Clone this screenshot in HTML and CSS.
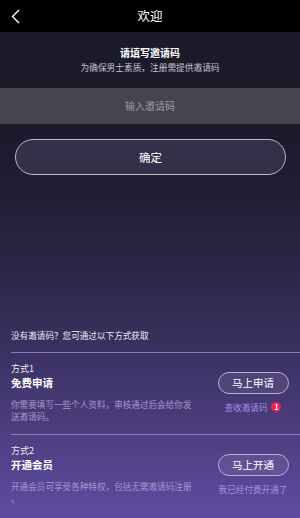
FILE: index.html
```html
<!DOCTYPE html>
<html lang="zh">
<head>
  <meta charset="UTF-8" />
  <meta name="viewport" content="width=device-width, initial-scale=1.0"/>
  <title>欢迎</title>
  <link rel="stylesheet" href="styles.css">
</head>
<body>
  <div class="page">
    <header class="topbar">
      <span class="back">
        <svg width="9" height="15" viewBox="0 0 9 15"><polyline points="8,1 1.5,7.5 8,14" fill="none" stroke="#fff" stroke-width="1.4"/></svg>
      </span>
      <h1>欢迎</h1>
      <span></span>
    </header>

    <div class="intro">
      <div class="intro-title">请填写邀请码</div>
      <div class="intro-sub">为确保男士素质，注册需提供邀请码</div>
    </div>

    <div class="code-input">输入邀请码</div>
    <div class="confirm">确定</div>

    <div class="notice">没有邀请码？您可通过以下方式获取</div>

    <div class="divider"></div>
    <div class="way">
      <div class="way-info">
        <div class="way-label">方式1</div>
        <div class="way-title">免费申请</div>
        <div class="way-desc">你需要填写一些个人资料，审核通过后会给你发送邀请码。</div>
      </div>
      <div class="way-action">
        <div class="pill">马上申请</div>
        <div class="link">查收邀请码 <span class="badge">1</span></div>
      </div>
    </div>

    <div class="divider"></div>
    <div class="way">
      <div class="way-info">
        <div class="way-label">方式2</div>
        <div class="way-title">开通会员</div>
        <div class="way-desc">开通会员可享受各种特权，包括无需邀请码注册。</div>
      </div>
      <div class="way-action">
        <div class="pill">马上开通</div>
        <div class="link">我已经付费开通了</div>
      </div>
    </div>
  </div>
</body>
</html>
```

FILE: styles.css
```css
body {
  margin: 0;
  padding: 0;
  font-family: 'Noto Sans CJK SC', 'Noto Sans', sans-serif;
  color: #fff;
  background: #000;
}

.page {
  height: 518px;
  overflow: hidden;
  display: flex;
  flex-direction: column;
  background: linear-gradient(to bottom, #000 0, #000 32px, #1c1929 32px, #1f1b30 170px, #2e2749 280px, #3f3469 370px, #5f4ca0 518px);
}

.topbar {
  height: 32px;
  display: grid;
  grid-template-columns: 40px 1fr 40px;
  align-items: center;
}

.back {
  display: flex;
  padding-left: 11px;
}

.topbar h1 {
  margin: 0;
  font-size: 12.5px;
  font-weight: normal;
  text-align: center;
  line-height: 32px;
}

.intro {
  padding-top: 14px;
  text-align: center;
}

.intro-title {
  font-size: 10px;
  font-weight: bold;
  line-height: 14px;
}

.intro-sub {
  margin-top: 2px;
  font-size: 8.7px;
  line-height: 12px;
  color: #c4c2cc;
}

.code-input {
  margin-top: 14px;
  height: 36px;
  background: #47444f;
  color: #9d9aa5;
  font-size: 10px;
  line-height: 36px;
  text-align: center;
}

.confirm {
  margin: 15px 14px 0 15px;
  height: 34px;
  border: 1.5px solid #bdb9c9;
  border-radius: 19px;
  background: #35304a;
  font-size: 11.5px;
  line-height: 34px;
  text-align: center;
}

.notice {
  margin-top: 154px;
  padding-left: 11px;
  font-size: 8.6px;
  line-height: 12px;
  color: #ecebf2;
}

.divider {
  margin: 11px 0 0 11px;
  height: 1px;
  background: #8d80b6;
}

.way + .divider {
  margin-top: 0;
}

.way {
  display: flex;
  justify-content: space-between;
  padding: 10px 11px 12px 11px;
}

.way-info {
  width: 186px;
}

.way-label {
  font-size: 9px;
  line-height: 12px;
  color: #f0eef6;
}

.way-title {
  margin-top: 1px;
  font-size: 10.5px;
  font-weight: bold;
  line-height: 14px;
}

.way-desc {
  margin-top: 8px;
  font-size: 8.6px;
  line-height: 12px;
  color: #a598cc;
  line-break: anywhere;
}

.way-action {
  width: 72px;
  padding-top: 9px;
  display: flex;
  flex-direction: column;
  align-items: center;
}

.pill {
  width: 69px;
  height: 20px;
  border: 1.5px solid #b8aed6;
  border-radius: 12px;
  background: rgba(255, 255, 255, 0.08);
  font-size: 10.5px;
  line-height: 20px;
  text-align: center;
}

.link {
  margin-top: 7px;
  display: flex;
  align-items: center;
  gap: 4px;
  font-size: 8.6px;
  line-height: 12px;
  color: #a48fe4;
  white-space: nowrap;
}

.badge {
  width: 10px;
  height: 10px;
  border-radius: 50%;
  background: #ea2451;
  color: #fff;
  font-size: 7px;
  line-height: 10px;
  text-align: center;
  font-weight: bold;
}
```
